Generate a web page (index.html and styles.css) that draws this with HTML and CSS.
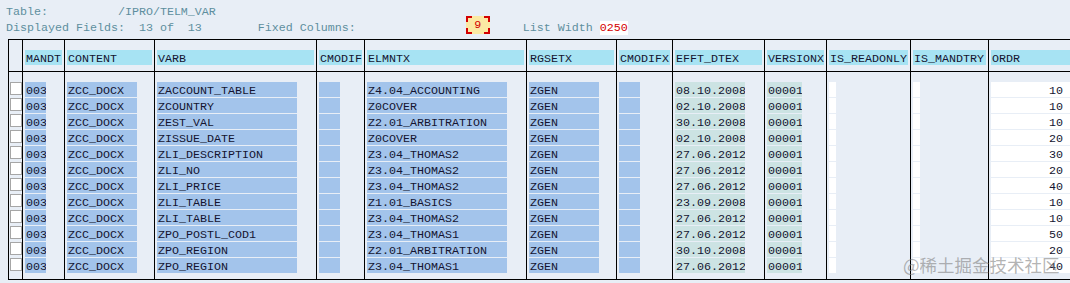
FILE: index.html
```html
<!doctype html>
<html lang="en">
  <head>
    <meta charset="UTF-8" />
    <title>Data Browser: /IPRO/TELM_VAR</title>
    <link rel="stylesheet" href="styles.css">
  </head>
  <body>
    <div class="info">
      <div class="line">Table:          /IPRO/TELM_VAR</div>
      <div class="line">
        <span>Displayed Fields:  13 of  13        Fixed Columns:</span>
        <span class="fixed-box">9</span>
        <span class="list-label">List Width</span>
        <span class="list-value">0250</span>
      </div>
    </div>

    <div class="grid">
      <div class="row head">
        <div class="c"></div>
        <div class="c"><span class="f">MANDT</span></div>
        <div class="c"><span class="f">CONTENT</span></div>
        <div class="c"><span class="f">VARB</span></div>
        <div class="c"><span class="f">CMODIF</span></div>
        <div class="c"><span class="f">ELMNTX</span></div>
        <div class="c"><span class="f">RGSETX</span></div>
        <div class="c"><span class="f">CMODIFX</span></div>
        <div class="c"><span class="f">EFFT_DTEX</span></div>
        <div class="c"><span class="f">VERSIONX</span></div>
        <div class="c"><span class="f">IS_READONLY</span></div>
        <div class="c"><span class="f">IS_MANDTRY</span></div>
        <div class="c"><span class="f">ORDR</span></div>
      </div>

      <div class="body">
        <div class="row">
          <div class="c cb"><span class="box"></span></div>
          <div class="c"><span class="f w3">003</span></div>
          <div class="c"><span class="f w10">ZCC_DOCX</span></div>
          <div class="c"><span class="f w20">ZACCOUNT_TABLE</span></div>
          <div class="c"><span class="f w3"></span></div>
          <div class="c"><span class="f w20">Z4.04_ACCOUNTING</span></div>
          <div class="c"><span class="f w10">ZGEN</span></div>
          <div class="c"><span class="f w3"></span></div>
          <div class="c"><span class="f w10 date">08.10.2008</span></div>
          <div class="c"><span class="f w5 date">00001</span></div>
          <div class="c"><span class="f w1 plain"></span></div>
          <div class="c"><span class="f w1 plain"></span></div>
          <div class="c"><span class="f num plain">10</span></div>
        </div>
        <div class="row">
          <div class="c cb"><span class="box"></span></div>
          <div class="c"><span class="f w3">003</span></div>
          <div class="c"><span class="f w10">ZCC_DOCX</span></div>
          <div class="c"><span class="f w20">ZCOUNTRY</span></div>
          <div class="c"><span class="f w3"></span></div>
          <div class="c"><span class="f w20">Z0COVER</span></div>
          <div class="c"><span class="f w10">ZGEN</span></div>
          <div class="c"><span class="f w3"></span></div>
          <div class="c"><span class="f w10 date">02.10.2008</span></div>
          <div class="c"><span class="f w5 date">00001</span></div>
          <div class="c"><span class="f w1 plain"></span></div>
          <div class="c"><span class="f w1 plain"></span></div>
          <div class="c"><span class="f num plain">10</span></div>
        </div>
        <div class="row">
          <div class="c cb"><span class="box"></span></div>
          <div class="c"><span class="f w3">003</span></div>
          <div class="c"><span class="f w10">ZCC_DOCX</span></div>
          <div class="c"><span class="f w20">ZEST_VAL</span></div>
          <div class="c"><span class="f w3"></span></div>
          <div class="c"><span class="f w20">Z2.01_ARBITRATION</span></div>
          <div class="c"><span class="f w10">ZGEN</span></div>
          <div class="c"><span class="f w3"></span></div>
          <div class="c"><span class="f w10 date">30.10.2008</span></div>
          <div class="c"><span class="f w5 date">00001</span></div>
          <div class="c"><span class="f w1 plain"></span></div>
          <div class="c"><span class="f w1 plain"></span></div>
          <div class="c"><span class="f num plain">10</span></div>
        </div>
        <div class="row">
          <div class="c cb"><span class="box"></span></div>
          <div class="c"><span class="f w3">003</span></div>
          <div class="c"><span class="f w10">ZCC_DOCX</span></div>
          <div class="c"><span class="f w20">ZISSUE_DATE</span></div>
          <div class="c"><span class="f w3"></span></div>
          <div class="c"><span class="f w20">Z0COVER</span></div>
          <div class="c"><span class="f w10">ZGEN</span></div>
          <div class="c"><span class="f w3"></span></div>
          <div class="c"><span class="f w10 date">02.10.2008</span></div>
          <div class="c"><span class="f w5 date">00001</span></div>
          <div class="c"><span class="f w1 plain"></span></div>
          <div class="c"><span class="f w1 plain"></span></div>
          <div class="c"><span class="f num plain">20</span></div>
        </div>
        <div class="row">
          <div class="c cb"><span class="box"></span></div>
          <div class="c"><span class="f w3">003</span></div>
          <div class="c"><span class="f w10">ZCC_DOCX</span></div>
          <div class="c"><span class="f w20">ZLI_DESCRIPTION</span></div>
          <div class="c"><span class="f w3"></span></div>
          <div class="c"><span class="f w20">Z3.04_THOMAS2</span></div>
          <div class="c"><span class="f w10">ZGEN</span></div>
          <div class="c"><span class="f w3"></span></div>
          <div class="c"><span class="f w10 date">27.06.2012</span></div>
          <div class="c"><span class="f w5 date">00001</span></div>
          <div class="c"><span class="f w1 plain"></span></div>
          <div class="c"><span class="f w1 plain"></span></div>
          <div class="c"><span class="f num plain">30</span></div>
        </div>
        <div class="row">
          <div class="c cb"><span class="box"></span></div>
          <div class="c"><span class="f w3">003</span></div>
          <div class="c"><span class="f w10">ZCC_DOCX</span></div>
          <div class="c"><span class="f w20">ZLI_NO</span></div>
          <div class="c"><span class="f w3"></span></div>
          <div class="c"><span class="f w20">Z3.04_THOMAS2</span></div>
          <div class="c"><span class="f w10">ZGEN</span></div>
          <div class="c"><span class="f w3"></span></div>
          <div class="c"><span class="f w10 date">27.06.2012</span></div>
          <div class="c"><span class="f w5 date">00001</span></div>
          <div class="c"><span class="f w1 plain"></span></div>
          <div class="c"><span class="f w1 plain"></span></div>
          <div class="c"><span class="f num plain">20</span></div>
        </div>
        <div class="row">
          <div class="c cb"><span class="box"></span></div>
          <div class="c"><span class="f w3">003</span></div>
          <div class="c"><span class="f w10">ZCC_DOCX</span></div>
          <div class="c"><span class="f w20">ZLI_PRICE</span></div>
          <div class="c"><span class="f w3"></span></div>
          <div class="c"><span class="f w20">Z3.04_THOMAS2</span></div>
          <div class="c"><span class="f w10">ZGEN</span></div>
          <div class="c"><span class="f w3"></span></div>
          <div class="c"><span class="f w10 date">27.06.2012</span></div>
          <div class="c"><span class="f w5 date">00001</span></div>
          <div class="c"><span class="f w1 plain"></span></div>
          <div class="c"><span class="f w1 plain"></span></div>
          <div class="c"><span class="f num plain">40</span></div>
        </div>
        <div class="row">
          <div class="c cb"><span class="box"></span></div>
          <div class="c"><span class="f w3">003</span></div>
          <div class="c"><span class="f w10">ZCC_DOCX</span></div>
          <div class="c"><span class="f w20">ZLI_TABLE</span></div>
          <div class="c"><span class="f w3"></span></div>
          <div class="c"><span class="f w20">Z1.01_BASICS</span></div>
          <div class="c"><span class="f w10">ZGEN</span></div>
          <div class="c"><span class="f w3"></span></div>
          <div class="c"><span class="f w10 date">23.09.2008</span></div>
          <div class="c"><span class="f w5 date">00001</span></div>
          <div class="c"><span class="f w1 plain"></span></div>
          <div class="c"><span class="f w1 plain"></span></div>
          <div class="c"><span class="f num plain">10</span></div>
        </div>
        <div class="row">
          <div class="c cb"><span class="box"></span></div>
          <div class="c"><span class="f w3">003</span></div>
          <div class="c"><span class="f w10">ZCC_DOCX</span></div>
          <div class="c"><span class="f w20">ZLI_TABLE</span></div>
          <div class="c"><span class="f w3"></span></div>
          <div class="c"><span class="f w20">Z3.04_THOMAS2</span></div>
          <div class="c"><span class="f w10">ZGEN</span></div>
          <div class="c"><span class="f w3"></span></div>
          <div class="c"><span class="f w10 date">27.06.2012</span></div>
          <div class="c"><span class="f w5 date">00001</span></div>
          <div class="c"><span class="f w1 plain"></span></div>
          <div class="c"><span class="f w1 plain"></span></div>
          <div class="c"><span class="f num plain">10</span></div>
        </div>
        <div class="row">
          <div class="c cb"><span class="box"></span></div>
          <div class="c"><span class="f w3">003</span></div>
          <div class="c"><span class="f w10">ZCC_DOCX</span></div>
          <div class="c"><span class="f w20">ZPO_POSTL_COD1</span></div>
          <div class="c"><span class="f w3"></span></div>
          <div class="c"><span class="f w20">Z3.04_THOMAS1</span></div>
          <div class="c"><span class="f w10">ZGEN</span></div>
          <div class="c"><span class="f w3"></span></div>
          <div class="c"><span class="f w10 date">27.06.2012</span></div>
          <div class="c"><span class="f w5 date">00001</span></div>
          <div class="c"><span class="f w1 plain"></span></div>
          <div class="c"><span class="f w1 plain"></span></div>
          <div class="c"><span class="f num plain">50</span></div>
        </div>
        <div class="row">
          <div class="c cb"><span class="box"></span></div>
          <div class="c"><span class="f w3">003</span></div>
          <div class="c"><span class="f w10">ZCC_DOCX</span></div>
          <div class="c"><span class="f w20">ZPO_REGION</span></div>
          <div class="c"><span class="f w3"></span></div>
          <div class="c"><span class="f w20">Z2.01_ARBITRATION</span></div>
          <div class="c"><span class="f w10">ZGEN</span></div>
          <div class="c"><span class="f w3"></span></div>
          <div class="c"><span class="f w10 date">30.10.2008</span></div>
          <div class="c"><span class="f w5 date">00001</span></div>
          <div class="c"><span class="f w1 plain"></span></div>
          <div class="c"><span class="f w1 plain"></span></div>
          <div class="c"><span class="f num plain">20</span></div>
        </div>
        <div class="row">
          <div class="c cb"><span class="box"></span></div>
          <div class="c"><span class="f w3">003</span></div>
          <div class="c"><span class="f w10">ZCC_DOCX</span></div>
          <div class="c"><span class="f w20">ZPO_REGION</span></div>
          <div class="c"><span class="f w3"></span></div>
          <div class="c"><span class="f w20">Z3.04_THOMAS1</span></div>
          <div class="c"><span class="f w10">ZGEN</span></div>
          <div class="c"><span class="f w3"></span></div>
          <div class="c"><span class="f w10 date">27.06.2012</span></div>
          <div class="c"><span class="f w5 date">00001</span></div>
          <div class="c"><span class="f w1 plain"></span></div>
          <div class="c"><span class="f w1 plain"></span></div>
          <div class="c"><span class="f num plain">40</span></div>
        </div>
      </div>
    </div>

    <div class="watermark">@稀土掘金技术社区</div>
  </body>
</html>
```

FILE: styles.css
```css
:root {
  --bg: #e8eef6;
  --head: #a7e3f3;
  --field: #a3c4eb;
  --date: #cce3e3;
  --ink: #141430;
  --label: #5e8e9e;
  --red: #d40000;
}

* {
  box-sizing: border-box;
}

body {
  margin: 0;
  width: 1070px;
  height: 283px;
  overflow: hidden;
  position: relative;
  background: var(--bg);
  color: var(--ink);
  font-family: "Liberation Mono", "Courier New", monospace;
  font-size: 11.67px;
}

.info {
  padding: 4px 0 0 6px;
  color: var(--label);
}

.line {
  display: flex;
  align-items: center;
  height: 16px;
  white-space: pre;
}

.fixed-box {
  align-self: flex-start;
  margin: -4px 0 0 110px;
  width: 24px;
  height: 18px;
  line-height: 19px;
  text-align: center;
  color: var(--red);
  background:
    linear-gradient(var(--red), var(--red)) left top / 6px 2px no-repeat,
    linear-gradient(var(--red), var(--red)) left top / 2px 6px no-repeat,
    linear-gradient(var(--red), var(--red)) right top / 6px 2px no-repeat,
    linear-gradient(var(--red), var(--red)) right top / 2px 6px no-repeat,
    linear-gradient(var(--red), var(--red)) left bottom / 6px 2px no-repeat,
    linear-gradient(var(--red), var(--red)) left bottom / 2px 6px no-repeat,
    linear-gradient(var(--red), var(--red)) right bottom / 6px 2px no-repeat,
    linear-gradient(var(--red), var(--red)) right bottom / 2px 6px no-repeat,
    #fbe9a3;
}

.list-label {
  margin-left: 33px;
}

.list-value {
  margin-left: 7px;
  height: 14px;
  line-height: 14px;
  background: #fff;
  color: var(--red);
}

/* result list */
.grid {
  margin: 3px 0 0 8px;
  width: 1080px;
  border-top: 1px solid #000;
}

.row {
  display: grid;
  grid-template-columns: 14px 42px 90px 162px 48px 162px 90px 56px 92px 62px 84px 78px 100px;
}

.c {
  min-width: 0;
  overflow: hidden;
  border-left: 1px solid #000;
  padding: 0 0 1px 2px;
}

.head .c {
  padding: 10px 0 6px 2px;
  border-bottom: 1px solid #000;
}

.body .row:first-child .c {
  padding-top: 10px;
}

.body .row:last-child .c {
  padding-bottom: 6px;
  border-bottom: 1px solid #000;
}

.c.cb {
  padding-left: 1px;
}

.box {
  display: block;
  width: 12px;
  height: 13px;
  background: #fff;
  border: 1px solid #a6a6a6;
}

.f {
  display: block;
  height: 15px;
  line-height: 18px;
  padding-left: 1px;
  white-space: pre;
  overflow: hidden;
  background: var(--field);
}

.head .f {
  width: calc(100% - 2px);
  background: var(--head);
}

.w1 { width: 7px; }
.w3 { width: 21px; }
.w5 { width: 35px; }
.w10 { width: 70px; }
.w20 { width: 140px; }

.date {
  background: var(--date);
}

.plain {
  background: #fff;
}

.num {
  width: 79px;
  padding-right: 7px;
  text-align: right;
}

.watermark {
  position: absolute;
  left: 903px;
  top: 254px;
  font-family: "Noto Sans CJK SC", sans-serif;
  font-size: 17.5px;
  line-height: 22px;
  color: rgba(130, 130, 130, 0.6);
  white-space: nowrap;
}
```
